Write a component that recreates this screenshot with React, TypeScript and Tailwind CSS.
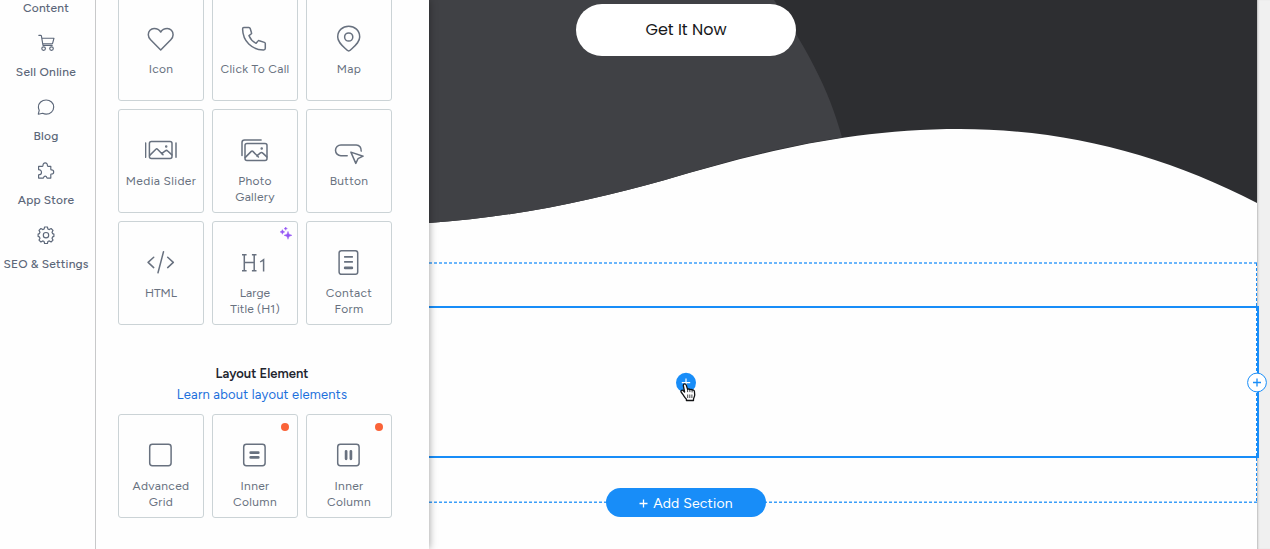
import type { ReactNode } from "react";

type Tile = { label: string[]; spacing: string; icon: ReactNode; badge?: "dot" | "sparkle" };

function Glyph({ children }: { children: ReactNode }) {
  return (
    <svg width="32" height="32" viewBox="0.3 0.5 32 32" fill="none" stroke="#68717f" strokeWidth="1.5" strokeLinecap="round" strokeLinejoin="round">
      {children}
    </svg>
  );
}

const heart = (
  <Glyph>
    <path d="M16 28.500 5.900 18.200C4.200 16.400 3.600 14.800 3.600 13.200 3.600 9.900 6.200 7 9.400 7c3 0 5.300 1.300 6.600 3.500C17.300 8.300 19.600 7 22.600 7c3.200 0 5.800 2.900 5.800 6.200 0 1.600-.6 3.200-2.300 5z" />
  </Glyph>
);
const phone = (
  <Glyph>
    <path d="M5.100 6h5.100c.6 0 1.100.4 1.300 1l1.300 4.200c.2.5 0 1-.4 1.300l-2.100 1.700c1.500 3.500 3.800 6 7.100 7.600l1.800-2.200c.3-.4.900-.6 1.400-.4l5.100 1.700c.6.2.9.600.9 1.200v4.700c0 1-.7 1.700-1.700 1.700C13.200 28.600 4.100 19.600 3.900 7.500 3.900 6.600 4.300 6 5.100 6z" />
  </Glyph>
);
const pin = (
  <Glyph>
    <path d="M16 29.400c-.6 0-1.100-.2-1.500-.6C9.600 24.100 5 20.600 5 15.400 5 8.900 10 4.800 16 4.800s11 4.100 11 10.600c0 5.200-4.600 8.700-9.500 13.400-.4.400-.9.600-1.500.6z" />
    <circle cx="16" cy="15.500" r="4.100" />
  </Glyph>
);
const slider = (
  <Glyph>
    <rect x="4.700" y="8.100" width="22.600" height="17" rx="2" />
    <path d="M.9 9.400v14.300M31.300 9.400v14.300M5 21.900l6.200-6.200c.5-.5 1.100-.5 1.600 0l5.500 5.600M16.900 20.200l3.700-2.900c.8-.6 1.700-.5 2.400.2l4.200 3.900" />
    <circle cx="21.500" cy="12.900" r=".5" fill="#68717f" />
  </Glyph>
);
const gallery = (
  <Glyph>
    <path d="M3.300 21.900V9.100c0-1.500 1-2.500 2.500-2.500h16.600" />
    <rect x="6.300" y="10.100" width="22" height="17" rx="2" />
    <path d="m6.600 23.900 6-6c.5-.5 1.100-.5 1.600 0l5.500 5.600M18.200 22.400l3.500-3c.8-.6 1.700-.5 2.400.2l4 3.800" />
    <circle cx="23" cy="14.900" r=".5" fill="#68717f" />
  </Glyph>
);
const button = (
  <Glyph>
    <path d="M14.500 22.200H8.200a5.400 5.400 0 0 1 0-10.800h15.400c3.200 0 5.100 2.800 4.900 6.200M18.200 18.600l12.200 4.100-5.100 2.500-2.200 4.700z" />
  </Glyph>
);
const html = (
  <Glyph>
    <path d="m9 11.700-5.600 5.200L9 22.100M23 11.700l5.600 5.200-5.600 5.200M18.800 6.300l-5.500 20.900" />
  </Glyph>
);
const heading = (
  <Glyph>
    <path d="M3.300 9.200h4.600M13.200 9.200h4.600M3.300 25.200h4.600M13.200 25.200h4.600M5.600 9.200v16M15.500 9.200v16M5.600 16.900h9.900M21.500 16.500l3.400-2.300v11.700" strokeLinecap="butt" strokeLinejoin="miter" />
  </Glyph>
);
const form = (
  <Glyph>
    <rect x="6.400" y="5.200" width="18.600" height="23.600" rx="2.300" />
    <path d="M11.400 11.400h8.800M11.400 16.400h8.800" strokeLinecap="butt" strokeWidth="1.600" />
    <path d="M12.400 22.400h6.800" strokeWidth="2.600" />
  </Glyph>
);
const grid = (
  <Glyph>
    <rect x="5" y="5.800" width="21.400" height="21.400" rx="2.700" />
  </Glyph>
);
const rows = (
  <Glyph>
    <rect x="5" y="5.800" width="21.400" height="21.400" rx="2.700" />
    <path d="M12 14.200h7.600M12 18.900h7.600" strokeWidth="2.700" />
  </Glyph>
);
const columns = (
  <Glyph>
    <rect x="5" y="5.800" width="21.400" height="21.400" rx="2.700" />
    <path d="M13.400 12.800v7.500M18.200 12.800v7.500" strokeWidth="2.700" />
  </Glyph>
);

const elements: Tile[] = [
  { label: ["Icon"], spacing: "tracking-[0.3px]", icon: heart },
  { label: ["Click To Call"], spacing: "tracking-[0.3px]", icon: phone },
  { label: ["Map"], spacing: "tracking-[0.3px]", icon: pin },
  { label: ["Media Slider"], spacing: "tracking-[0.36px]", icon: slider },
  { label: ["Photo", "Gallery"], spacing: "tracking-[0.3px]", icon: gallery },
  { label: ["Button"], spacing: "tracking-[0.3px]", icon: button },
  { label: ["HTML"], spacing: "tracking-[0px]", icon: html },
  { label: ["Large", "Title (H1)"], spacing: "tracking-[0.1px]", icon: heading, badge: "sparkle" },
  { label: ["Contact", "Form"], spacing: "tracking-[0.36px]", icon: form },
];

const layouts: Tile[] = [
  { label: ["Advanced", "Grid"], spacing: "tracking-[0.36px]", icon: grid },
  { label: ["Inner", "Column"], spacing: "tracking-[0.36px]", icon: rows, badge: "dot" },
  { label: ["Inner", "Column"], spacing: "tracking-[0.36px]", icon: columns, badge: "dot" },
];

function TileCard({ tile }: { tile: Tile }) {
  return (
    <div className="relative flex h-[104px] flex-col items-center rounded-[3px] border border-[#cbd3d6] pt-[24px]">
      {tile.icon}
      <div className={"mt-[7px] whitespace-nowrap text-center text-[12px] leading-[16px] text-[#68717f] " + tile.spacing}>
        {tile.label.map((line) => (
          <div key={line}>{line}</div>
        ))}
      </div>
      {tile.badge === "dot" && <span className="absolute right-[8px] top-[8px] size-[8px] rounded-full bg-[#fa6338]" />}
      {tile.badge === "sparkle" && (
        <svg className="absolute right-[5px] top-[5px]" width="12" height="13" viewBox="0 0 12 13" fill="#9457f5" stroke="#9457f5" strokeWidth=".4" strokeLinejoin="round">
          <path d="M8 4.300 9 7.200 12 8.300 9 9.400 8 12.300 7 9.400 4 8.300 7 7.200z" />
          <path d="m2.400 2.600.7 1.500 1.700.8-1.700.8-.7 1.600-.7-1.600L0 4.900l1.700-.8zM5.700 0l.5 1.100 1.200.5-1.200.5-.5 1.200-.5-1.200L4 1.600l1.200-.5z" />
        </svg>
      )}
    </div>
  );
}

function NavGlyph({ children }: { children: ReactNode }) {
  return (
    <svg width="18" height="18" viewBox="0 0 18 18" fill="none" stroke="#5c6779" strokeWidth="1.150" strokeLinecap="round" strokeLinejoin="round">
      {children}
    </svg>
  );
}

const nav = [
  {
    label: "Sell Online",
    spacing: "tracking-[0.27px]",
    icon: (
      <NavGlyph>
        <path d="M1.800 1.300h1.800c.4 0 .7.200.8.600L6 11.500h9.200M5 4.200h12l-1.400 5.100c-.1.400-.4.600-.8.600H5.800" />
        <circle cx="6.600" cy="14.600" r="1.800" />
        <circle cx="14.500" cy="14.600" r="1.800" />
      </NavGlyph>
    ),
  },
  {
    label: "Blog",
    spacing: "tracking-[0.2px]",
    icon: (
      <NavGlyph>
        <path d="M1.300 16.200 2.200 12.300A7.200 7.200 0 0 1 1.400 9c0-4 3.400-7 7.700-7s7.600 3 7.600 7-3.300 7.100-7.600 7.100c-1.200 0-2.400-.3-3.400-.8z" />
      </NavGlyph>
    ),
  },
  {
    label: "App Store",
    spacing: "tracking-[0.15px]",
    icon: (
      <NavGlyph>
        <path d="M1.600 4.300h3.700c.5 0 .7-.3.700-.7C5.900 2 6.800.9 8.200.9s2.300 1.100 2.200 2.700c0 .4.200.700.7.700h2.700v3c0 .4.200.600.600.6 1.300 0 2.300.7 2.300 2s-1 2.100-2.300 2.100c-.4 0-.6.200-.6.600v3.500h-3.500c-.2 0-.4-.2-.5-.5-.2-1-.8-1.500-1.600-1.500s-1.400.5-1.600 1.500c-.1.300-.3.500-.5.500H1.600v-3.400c1.700 0 2.900-.8 2.900-2.300S3.300 7.600 1.600 7.700z" />
      </NavGlyph>
    ),
  },
  {
    label: "SEO & Settings",
    spacing: "tracking-[0.17px]",
    icon: (
      <NavGlyph>
        <path d="M7.600 1h2.800l.5 2 1.400.6 1.800-1.100 1.900 1.900L15 6.200l.6 1.400 1.300.5v2.300l-1.300.5-.6 1.400 1 1.800-1.900 1.900-1.800-1.100-1.400.6-.5 2H7.600l-.5-2-1.400-.6L3.900 16 2 14.100l1-1.800-.6-1.400-1.300-.5V8.100l1.300-.5L3 6.200 2 4.400l1.900-1.900 1.800 1.100L7.100 3z" />
        <circle cx="9" cy="9.200" r="2.700" />
      </NavGlyph>
    ),
  },
];

export default function App() {
  return (
    <div className="flex h-[549px] w-[1270px] overflow-hidden bg-[#fefefe] font-['Figtree','Inter','Liberation_Sans',sans-serif]">
      <nav className="flex w-[96px] shrink-0 flex-col items-center border-r border-[#c8c9ca] pr-[3px] text-[12px] font-medium text-[#5c6779]">
        <div className="h-[16px] leading-[16px] tracking-[0.15px]">Content</div>
        {nav.map((item) => (
          <div key={item.label} className="flex h-[64px] flex-col items-center pt-[18px]">
            {item.icon}
            <div className={"mt-[12px] whitespace-nowrap leading-[16px] " + item.spacing}>{item.label}</div>
          </div>
        ))}
      </nav>

      <aside className="relative z-10 h-[549px] w-[333px] shrink-0 overflow-visible bg-[#fefefe] px-[22px] shadow-[0_0_8px_rgba(0,0,0,0.4)] [clip-path:inset(0_-10px_0_0)]">
        <div className="-mt-[3px] grid w-[274px] grid-cols-3 gap-[8px]">
          {elements.map((tile) => (
            <TileCard key={tile.label.join(" ")} tile={tile} />
          ))}
        </div>
        <h2 className="mt-[40px] pr-[1px] text-center text-[13px] font-semibold leading-[18px] tracking-[0.03px] text-[#22252e]">Layout Element</h2>
        <a className="mt-[3px] block whitespace-nowrap pr-[1px] text-center text-[13px] leading-[18px] tracking-[0.2px] text-[#1c70dc]">Learn about layout elements</a>
        <div className="mt-[10px] grid w-[274px] grid-cols-3 gap-[8px]">
          {layouts.map((tile, i) => (
            <TileCard key={i} tile={tile} />
          ))}
        </div>
      </aside>

      <main className="relative flex w-[828px] shrink-0 flex-col">
        <header className="relative h-[262px] shrink-0">
          <svg className="absolute inset-0" width="828" height="262" viewBox="429 0 828 262">
            <path d="M429 0h828v203C1165 155 1065 129 960 129 850 129 760 152 665 180 590 201 515 217 429 223z" fill="#2d2e31" />
            <path d="M429 0H774C804 44 829 88 842 137.500 775 147.500 727 161.700 665 180 590 201 515 217 429 223z" fill="#404145" />
          </svg>
          <div className="relative pl-[147px] pt-[4px]">
            <button className="block h-[52px] w-[220px] rounded-full bg-white font-['Poppins','Figtree','Inter',sans-serif] text-[16px] text-[#18191b]">Get It Now</button>
          </div>
        </header>

        <section className="flex h-[241px] shrink-0 flex-col pt-[44px]">
          <div className="relative -mr-[2px] flex h-[152px] items-center justify-center border-y-2 border-r-2 border-[#188df8]" />
        </section>
        <svg className="absolute left-0 top-[262px]" width="828" height="242" viewBox="0 0 828 242" fill="none" stroke="#188df8">
          <path d="M0 1h828M0 240.300h828" strokeDasharray="3 2" strokeWidth="1.500" opacity=".85" />
          <path d="M827.500 1v239" strokeDasharray="3 2" />
        </svg>

        <button className="absolute left-[177px] top-[488px] flex h-[29px] w-[160px] items-center justify-center gap-[5px] rounded-full bg-[#188df8] pt-[1px] text-[14px] text-white">
          <svg width="9" height="9" viewBox="0 0 9 9" stroke="white" strokeWidth="1.300">
            <path d="M4.500.5v8M.5 4.500h8" />
          </svg>
          <span className="tracking-[0.2px]">Add Section</span>
        </button>

        <svg className="absolute left-[245px] top-[371px]" width="28" height="33" viewBox="0 0 28 33">
          <circle cx="12" cy="11.700" r="10" fill="#188df8" />
          <path d="M12 7.500v8.400M7.800 11.700h8.400" stroke="white" strokeWidth="1.200" />
          <path d="M9.300 14.500c0-1 .7-1.600 1.500-1.600.7 0 1.200.5 1.500 1.300l1.300 4.200c.3-.6 1.900-.6 2.300.3.500-.6 1.800-.5 2.200.4.800-.5 2.200 0 2.300 1.100l.3 3.500c.1 1.700-1 2.700-1.200 4.300v1.500h-7.100v-1.300c-1.500-1.500-2.500-3.300-3.600-4.800L7.100 21c-.8-1.200.7-2.500 1.900-1.500l1.600 1.500z" fill="white" stroke="#121315" strokeWidth="1.300" strokeLinejoin="round" />
          <path d="M13.600 18.300v2.800M15.900 18.700v2.400M18.100 19.100v2.300M13.700 23.500v3.500M15.800 23.500v3.500M17.900 23.500v3.500" stroke="#121315" strokeWidth=".8" />
        </svg>

        <svg className="absolute -right-[10px] top-[372px] z-20" width="20" height="21" viewBox="0 0 20 21" fill="white" stroke="#188df8">
          <circle cx="10" cy="10.500" r="9.400" />
          <path d="M10 6.500v8M6 10.500h8" strokeWidth="1.300" />
        </svg>
      </main>
      <div className="w-[13px] shrink-0 bg-[#f0f0f0] shadow-[inset_2px_0_2px_-1px_rgba(0,0,0,0.22)]" />
    </div>
  );
}
